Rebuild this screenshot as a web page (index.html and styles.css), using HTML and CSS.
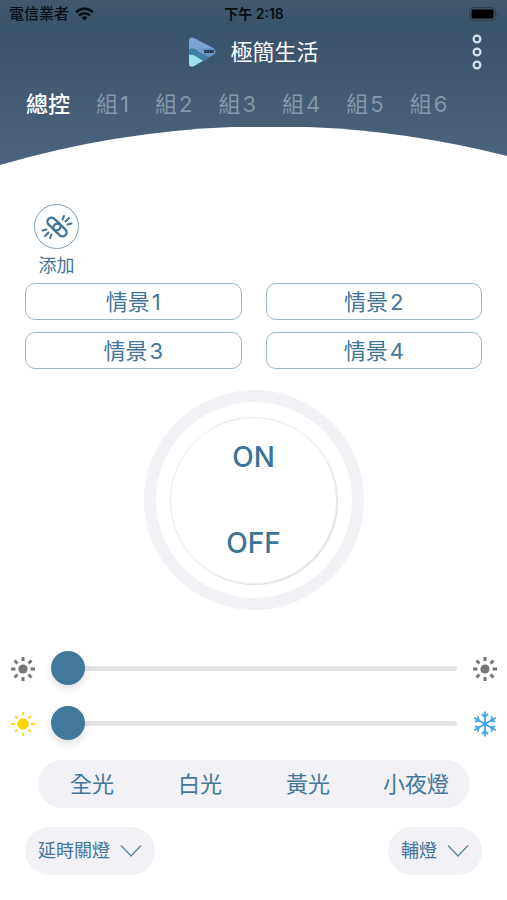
FILE: index.html
```
<!DOCTYPE html>
<html lang="zh-Hant">
<head>
    <meta charset="UTF-8">
    <meta name="viewport" content="width=device-width, initial-scale=1.0">
    <title>極簡生活</title>
    <link rel="stylesheet" href="styles.css">
</head>
<body>

    <header class="header">
        <div class="status-bar">
            <div class="carrier">
                <span>電信業者</span>
                <svg width="19" height="14" viewBox="0 0 19 14" fill="none" stroke="#080d12" stroke-width="2.6">
                    <path d="M1 5.2a12.2 12.2 0 0 1 17 0"/>
                    <path d="M4 8.5a7.8 7.8 0 0 1 11 0"/>
                    <path d="M9.5 13.5L6.6 10.6a4.1 4.1 0 0 1 5.8 0z" fill="#080d12" stroke="none"/>
                </svg>
            </div>
            <span class="time">下午 2:18</span>
            <div class="battery">
                <svg width="30" height="14" viewBox="0 0 30 14">
                    <rect x="0.5" y="0.5" width="26" height="13" rx="4" fill="#40505f" stroke="#2c4051"/>
                    <rect x="2.5" y="2.5" width="22" height="9" rx="2" fill="#000"/>
                    <path d="M28 5q2 2 0 4z" fill="#2c4051"/>
                </svg>
            </div>
        </div>

        <div class="title-bar">
            <div class="brand">
                <svg width="28" height="30" viewBox="0 0 28 30">
                    <clipPath id="logoShape">
                        <path d="M1 4Q1-1 6 1L25 11Q30 15 25 18L6 29Q1 31 1 26z"/>
                    </clipPath>
                    <g clip-path="url(#logoShape)">
                        <rect width="28" height="30" fill="#7ba3d8"/>
                        <path d="M0 13Q5 9 10 14T28 18V30H0z" fill="#3f80a6"/>
                        <path d="M0 18Q5 17 9 20T16 24L6 30H0z" fill="#9be0ea"/>
                        <path d="M9 12Q15 12 17 17T25 18L28 11H17z" fill="#6795c8"/>
                    </g>
                    <rect x="16" y="13" width="10" height="3" rx="1" fill="#26394d"/>
                    <path d="M18 14.5h1M21 14.5h1M24 14.5h1" stroke="#5b7288"/>
                </svg>
                <h1>極簡生活</h1>
            </div>
            <button type="button" class="menu-button" aria-label="選單">
                <svg width="10" height="38" viewBox="0 0 10 38" fill="none" stroke="#d5e0e9" stroke-width="2.2">
                    <circle cx="5" cy="6" r="3.4"/>
                    <circle cx="5" cy="19" r="3.4"/>
                    <circle cx="5" cy="32" r="3.4"/>
                </svg>
            </button>
        </div>

        <nav class="tabs">
            <a href="#all" class="active">總控</a>
            <a href="#g1">組<span class="num">1</span></a>
            <a href="#g2">組<span class="num">2</span></a>
            <a href="#g3">組<span class="num">3</span></a>
            <a href="#g4">組<span class="num">4</span></a>
            <a href="#g5">組<span class="num">5</span></a>
            <a href="#g6">組<span class="num">6</span></a>
        </nav>

        <svg class="curve" viewBox="0 0 507 39" preserveAspectRatio="none">
            <path d="M0 39V38A960 960 0 0 1 507 29V39z" fill="#fff"/>
        </svg>
    </header>

    <main>
        <button type="button" class="add-button">
            <span class="add-icon">
                <svg width="32" height="28" viewBox="0 0 32 28" fill="none" stroke="#3f7499" stroke-width="2.3" stroke-linecap="round">
                    <rect x="5.5" y="7" width="15" height="8" rx="4" transform="rotate(42 13 11)"/>
                    <rect x="11.5" y="13" width="15" height="8" rx="4" transform="rotate(42 19 17)"/>
                    <path d="M21.5 6.5L23 3M24.500 8.500L28 5M26.500 11.500L30.500 10.500M10.500 21.500L9 25M7.500 19.500L4 23M5.500 16.500L1.500 17.500" stroke-width="2"/>
                </svg>
            </span>
            <span>添加</span>
        </button>

        <div class="scenes">
            <button type="button">情景<span class="num">1</span></button>
            <button type="button">情景<span class="num">2</span></button>
            <button type="button">情景<span class="num">3</span></button>
            <button type="button">情景<span class="num">4</span></button>
        </div>

        <div class="dial">
            <div class="dial-inner">
                <button type="button">ON</button>
                <button type="button">OFF</button>
            </div>
        </div>

        <div class="slider-row">
            <svg class="icon" viewBox="0 0 26 26" stroke="#777" stroke-width="3">
                <circle cx="13" cy="13" r="4.6" fill="#777" stroke="none"/>
                <path d="M13 1v4M13 21v4M1 13h4.5M20.5 13H25M4.5 4.5l3 3M18.5 18.5l3 3M21.5 4.5l-3 3M7.5 18.5l-3 3"/>
            </svg>
            <input type="range" min="0" max="100" value="0" aria-label="亮度">
            <svg class="icon" viewBox="0 0 26 26" stroke="#777" stroke-width="3">
                <circle cx="13" cy="13" r="4.6" fill="#777" stroke="none"/>
                <path d="M13 1v4M13 21v4M1 13h4.5M20.5 13H25M4.5 4.5l3 3M18.5 18.5l3 3M21.5 4.5l-3 3M7.5 18.5l-3 3"/>
            </svg>
        </div>

        <div class="slider-row">
            <svg class="icon" viewBox="0 0 26 26" stroke="#ffd91a" stroke-width="1.8">
                <circle cx="13" cy="13" r="5.8" fill="#ffd60a" stroke="none"/>
                <path d="M13 1v3.5M13 21.5V25M1 13h4M21 13h4M5 5l2.5 2.5M18.5 18.5L21 21M21 5l-2.5 2.5M7.5 18.5L5 21"/>
            </svg>
            <input type="range" min="0" max="100" value="0" aria-label="色溫">
            <svg class="icon" viewBox="0 0 26 26" fill="none" stroke="#42a5e3" stroke-width="1.8">
                <path id="flakeArm" d="M13 13V0.5M10 3L13 6L16 3"/>
                <use href="#flakeArm" transform="rotate(60 13 13)"/>
                <use href="#flakeArm" transform="rotate(120 13 13)"/>
                <use href="#flakeArm" transform="rotate(180 13 13)"/>
                <use href="#flakeArm" transform="rotate(240 13 13)"/>
                <use href="#flakeArm" transform="rotate(300 13 13)"/>
            </svg>
        </div>

        <div class="modes">
            <button type="button">全光</button>
            <button type="button">白光</button>
            <button type="button">黃光</button>
            <button type="button">小夜燈</button>
        </div>

        <div class="options">
            <button type="button">
                <span>延時關燈</span>
                <svg width="22" height="14" viewBox="0 0 22 14" fill="none" stroke="#5b87a6" stroke-width="1.3">
                    <path d="M1 1.5L11 12L21 1.5"/>
                </svg>
            </button>
            <button type="button">
                <span>輔燈</span>
                <svg width="22" height="14" viewBox="0 0 22 14" fill="none" stroke="#5b87a6" stroke-width="1.3">
                    <path d="M1 1.5L11 12L21 1.5"/>
                </svg>
            </button>
        </div>
    </main>

</body>
</html>
```
FILE: styles.css
```
* {
    box-sizing: border-box;
}

body {
    margin: 0;
    font-family: Inter, "Noto Sans CJK TC", sans-serif;
    background-color: #fff;
    color: #44769a;
}

button {
    padding: 0;
    border: none;
    background: none;
    font-family: inherit;
    color: inherit;
    cursor: pointer;
}

svg {
    display: block;
}

.header {
    background: linear-gradient(#40596d, #39536a 16%, #425970 50%, #4c647d);
}

.status-bar {
    display: grid;
    grid-template-columns: 1fr auto 1fr;
    align-items: center;
    height: 28px;
    padding: 0 8px 0 9px;
    font-size: 15px;
    line-height: 20px;
    font-weight: 500;
    color: #080d12;
}

.carrier {
    display: flex;
    align-items: center;
    gap: 6px;
}

.time {
    font-size: 14px;
    font-weight: 600;
}

.battery {
    justify-self: end;
}

.title-bar {
    display: grid;
    grid-template-columns: 1fr auto 1fr;
    align-items: center;
    height: 48px;
    padding: 0 25px;
}

.brand {
    display: flex;
    grid-column: 2;
    align-items: center;
    gap: 14px;
}

h1 {
    margin: 0;
    font-size: 22px;
    line-height: 32px;
    font-weight: 400;
    color: #fff;
}

.menu-button {
    justify-self: end;
}

.tabs {
    display: flex;
    gap: 26px;
    height: 51px;
    padding: 12px 26px 0;
    font-size: 22px;
    line-height: 32px;
    white-space: nowrap;
}

.tabs a {
    color: #8598a9;
    text-decoration: none;
}

.tabs .active {
    color: #fff;
    font-weight: 500;
}

.num {
    margin-left: 2px;
}

.curve {
    width: 100%;
    height: 39px;
}

.add-button {
    display: flex;
    flex-direction: column;
    align-items: center;
    gap: 4px;
    margin: 38px 0 4px 34px;
    font-size: 18px;
    line-height: 26px;
}

.add-icon {
    display: grid;
    place-items: center;
    width: 45px;
    height: 45px;
    border: 1px solid #7a9db8;
    border-radius: 50%;
}

.scenes {
    display: grid;
    grid-template-columns: 1fr 1fr;
    gap: 12px 24px;
    padding: 0 25px;
}

.scenes button {
    height: 37px;
    border: 1px solid #9ab8cc;
    border-radius: 10px;
    font-size: 22px;
    line-height: 32px;
}

.dial {
    display: grid;
    place-items: center;
    width: 220px;
    height: 220px;
    margin: 21px auto 31px;
    border: 12px solid #f1f1f6;
    border-radius: 50%;
}

.dial-inner {
    display: flex;
    flex-direction: column;
    align-items: center;
    justify-content: center;
    gap: 50px;
    width: 167px;
    height: 167px;
    border: 1px solid #e9e9ea;
    border-radius: 50%;
    box-shadow: 1px 1px 1px #ddd;
}

.dial-inner button {
    font-size: 28px;
    line-height: 36px;
    font-weight: 500;
    color: #3c7396;
}

.slider-row {
    display: flex;
    align-items: center;
    gap: 15px;
    height: 55px;
    padding: 0 9px 0 10px;
}

.icon {
    flex: none;
    width: 26px;
    height: 26px;
}

.slider-row input {
    flex: 1;
    min-width: 0;
    height: 34px;
    margin: 0;
    background: none;
    appearance: none;
}

.slider-row input::-webkit-slider-runnable-track {
    height: 5px;
    border-radius: 3px;
    background-color: #e3e3e3;
}

.slider-row input::-webkit-slider-thumb {
    appearance: none;
    width: 34px;
    height: 34px;
    margin-top: -15px;
    border-radius: 50%;
    background-color: #44789b;
    box-shadow: 0 4px 8px rgba(0, 0, 0, 0.12);
}

.modes {
    display: grid;
    grid-template-columns: repeat(4, 1fr);
    height: 48px;
    margin: 9px 37px 19px 38px;
    border-radius: 24px;
    background-color: #f1f1f6;
}

.modes button {
    font-size: 22px;
    line-height: 32px;
}

.options {
    display: flex;
    justify-content: space-between;
    padding: 0 25px 25px;
}

.options button {
    display: flex;
    align-items: center;
    gap: 10px;
    height: 48px;
    padding: 0 13px;
    border-radius: 24px;
    background-color: #f1f1f6;
    font-size: 18px;
    line-height: 26px;
}
```
